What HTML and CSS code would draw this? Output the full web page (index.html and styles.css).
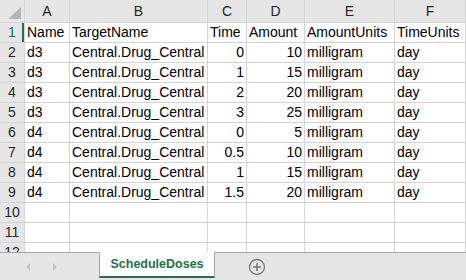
FILE: index.html
```html
<!DOCTYPE html>
<html lang="en">

<head>
    <meta charset="UTF-8">
    <title>ScheduleDoses</title>
    <link rel="stylesheet" href="styles.css">
</head>

<body>
    <div class="sheet">
        <div class="grid">
            <div class="corner"><span class="corner-tri"></span></div>
            <div class="col-head">A</div>
            <div class="col-head">B</div>
            <div class="col-head">C</div>
            <div class="col-head">D</div>
            <div class="col-head">E</div>
            <div class="col-head">F</div>
            <div class="col-head"></div>

            <div class="row-head active">1</div>
            <div class="cell">Name</div>
            <div class="cell">TargetName</div>
            <div class="cell">Time</div>
            <div class="cell">Amount</div>
            <div class="cell">AmountUnits</div>
            <div class="cell">TimeUnits</div>
            <div class="cell"></div>

            <div class="row-head">2</div>
            <div class="cell">d3</div>
            <div class="cell">Central.Drug_Central</div>
            <div class="cell num">0</div>
            <div class="cell num">10</div>
            <div class="cell">milligram</div>
            <div class="cell">day</div>
            <div class="cell"></div>

            <div class="row-head">3</div>
            <div class="cell">d3</div>
            <div class="cell">Central.Drug_Central</div>
            <div class="cell num">1</div>
            <div class="cell num">15</div>
            <div class="cell">milligram</div>
            <div class="cell">day</div>
            <div class="cell"></div>

            <div class="row-head">4</div>
            <div class="cell">d3</div>
            <div class="cell">Central.Drug_Central</div>
            <div class="cell num">2</div>
            <div class="cell num">20</div>
            <div class="cell">milligram</div>
            <div class="cell">day</div>
            <div class="cell"></div>

            <div class="row-head">5</div>
            <div class="cell">d3</div>
            <div class="cell">Central.Drug_Central</div>
            <div class="cell num">3</div>
            <div class="cell num">25</div>
            <div class="cell">milligram</div>
            <div class="cell">day</div>
            <div class="cell"></div>

            <div class="row-head">6</div>
            <div class="cell">d4</div>
            <div class="cell">Central.Drug_Central</div>
            <div class="cell num">0</div>
            <div class="cell num">5</div>
            <div class="cell">milligram</div>
            <div class="cell">day</div>
            <div class="cell"></div>

            <div class="row-head">7</div>
            <div class="cell">d4</div>
            <div class="cell">Central.Drug_Central</div>
            <div class="cell num">0.5</div>
            <div class="cell num">10</div>
            <div class="cell">milligram</div>
            <div class="cell">day</div>
            <div class="cell"></div>

            <div class="row-head">8</div>
            <div class="cell">d4</div>
            <div class="cell">Central.Drug_Central</div>
            <div class="cell num">1</div>
            <div class="cell num">15</div>
            <div class="cell">milligram</div>
            <div class="cell">day</div>
            <div class="cell"></div>

            <div class="row-head">9</div>
            <div class="cell">d4</div>
            <div class="cell">Central.Drug_Central</div>
            <div class="cell num">1.5</div>
            <div class="cell num">20</div>
            <div class="cell">milligram</div>
            <div class="cell">day</div>
            <div class="cell"></div>

            <div class="row-head">10</div>
            <div class="cell"></div><div class="cell"></div><div class="cell"></div>
            <div class="cell"></div><div class="cell"></div><div class="cell"></div><div class="cell"></div>

            <div class="row-head">11</div>
            <div class="cell"></div><div class="cell"></div><div class="cell"></div>
            <div class="cell"></div><div class="cell"></div><div class="cell"></div><div class="cell"></div>

            <div class="row-head">12</div>
            <div class="cell"></div><div class="cell"></div><div class="cell"></div>
            <div class="cell"></div><div class="cell"></div><div class="cell"></div><div class="cell"></div>
        </div>
    </div>

    <div class="tabbar">
        <div class="nav">
            <span class="arrow left"></span>
            <span class="arrow right"></span>
        </div>
        <div class="tab">ScheduleDoses</div>
        <div class="add">
            <svg width="18" height="18" viewBox="0 0 18 18">
                <circle cx="9" cy="9" r="7.5" fill="none" stroke="#7a7a7a" stroke-width="1.3" />
                <path d="M9 5v8M5 9h8" stroke="#7a7a7a" stroke-width="1.6" />
            </svg>
        </div>
    </div>
</body>

</html>
```

FILE: styles.css
```css
body {
    margin: 0;
    width: 466px;
    height: 280px;
    overflow: hidden;
    background-color: #ffffff;
    font-family: 'Liberation Sans', Arial, sans-serif;
    font-size: 14px;
    color: #000000;
}

.sheet {
    height: 252px;
    overflow: hidden;
}

.grid {
    display: grid;
    grid-template-columns: 24px 44px 137px 38px 57px 89px 70px 20px;
    grid-template-rows: 22px repeat(12, 19px);
    gap: 1px;
    background-color: #d4d4d4;
    width: 486px;
}

.corner {
    background-color: #e6e6e6;
    position: relative;
}

.corner-tri {
    position: absolute;
    right: 3px;
    bottom: 3px;
    width: 0;
    height: 0;
    border-left: 13px solid transparent;
    border-bottom: 12px solid #b5b5b5;
}

.col-head {
    background-color: #e6e6e6;
    color: #262626;
    text-align: center;
    line-height: 23px;
    font-size: 14px;
}

.row-head {
    background-color: #e6e6e6;
    color: #262626;
    text-align: center;
    line-height: 19px;
    font-size: 14px;
}

.row-head.active {
    color: #217346;
    box-shadow: inset -2px 0 0 #217346;
}

.cell {
    background-color: #ffffff;
    padding: 0 2px;
    line-height: 19px;
    white-space: nowrap;
    overflow: hidden;
}

.cell.num {
    text-align: right;
}

.tabbar {
    height: 27px;
    border-top: 1px solid #a6a6a6;
    background-color: #e6e6e6;
    display: flex;
    align-items: stretch;
}

.nav {
    width: 99px;
    display: flex;
    align-items: center;
    padding-left: 26px;
    gap: 23px;
    box-sizing: border-box;
}

.arrow {
    width: 0;
    height: 0;
    border-top: 4px solid transparent;
    border-bottom: 4px solid transparent;
}

.arrow.left {
    border-right: 4px solid #c4c4c4;
}

.arrow.right {
    border-left: 4px solid #c4c4c4;
}

.tab {
    width: 114px;
    margin-top: -1px;
    height: 24px;
    background-color: #ffffff;
    border-left: 1px solid #a6a6a6;
    border-right: 1px solid #a6a6a6;
    border-bottom: 2px solid #217346;
    color: #217346;
    font-weight: bold;
    font-size: 12.5px;
    text-align: center;
    line-height: 25px;
}

.add {
    margin-left: 33px;
    display: flex;
    align-items: center;
}
```
